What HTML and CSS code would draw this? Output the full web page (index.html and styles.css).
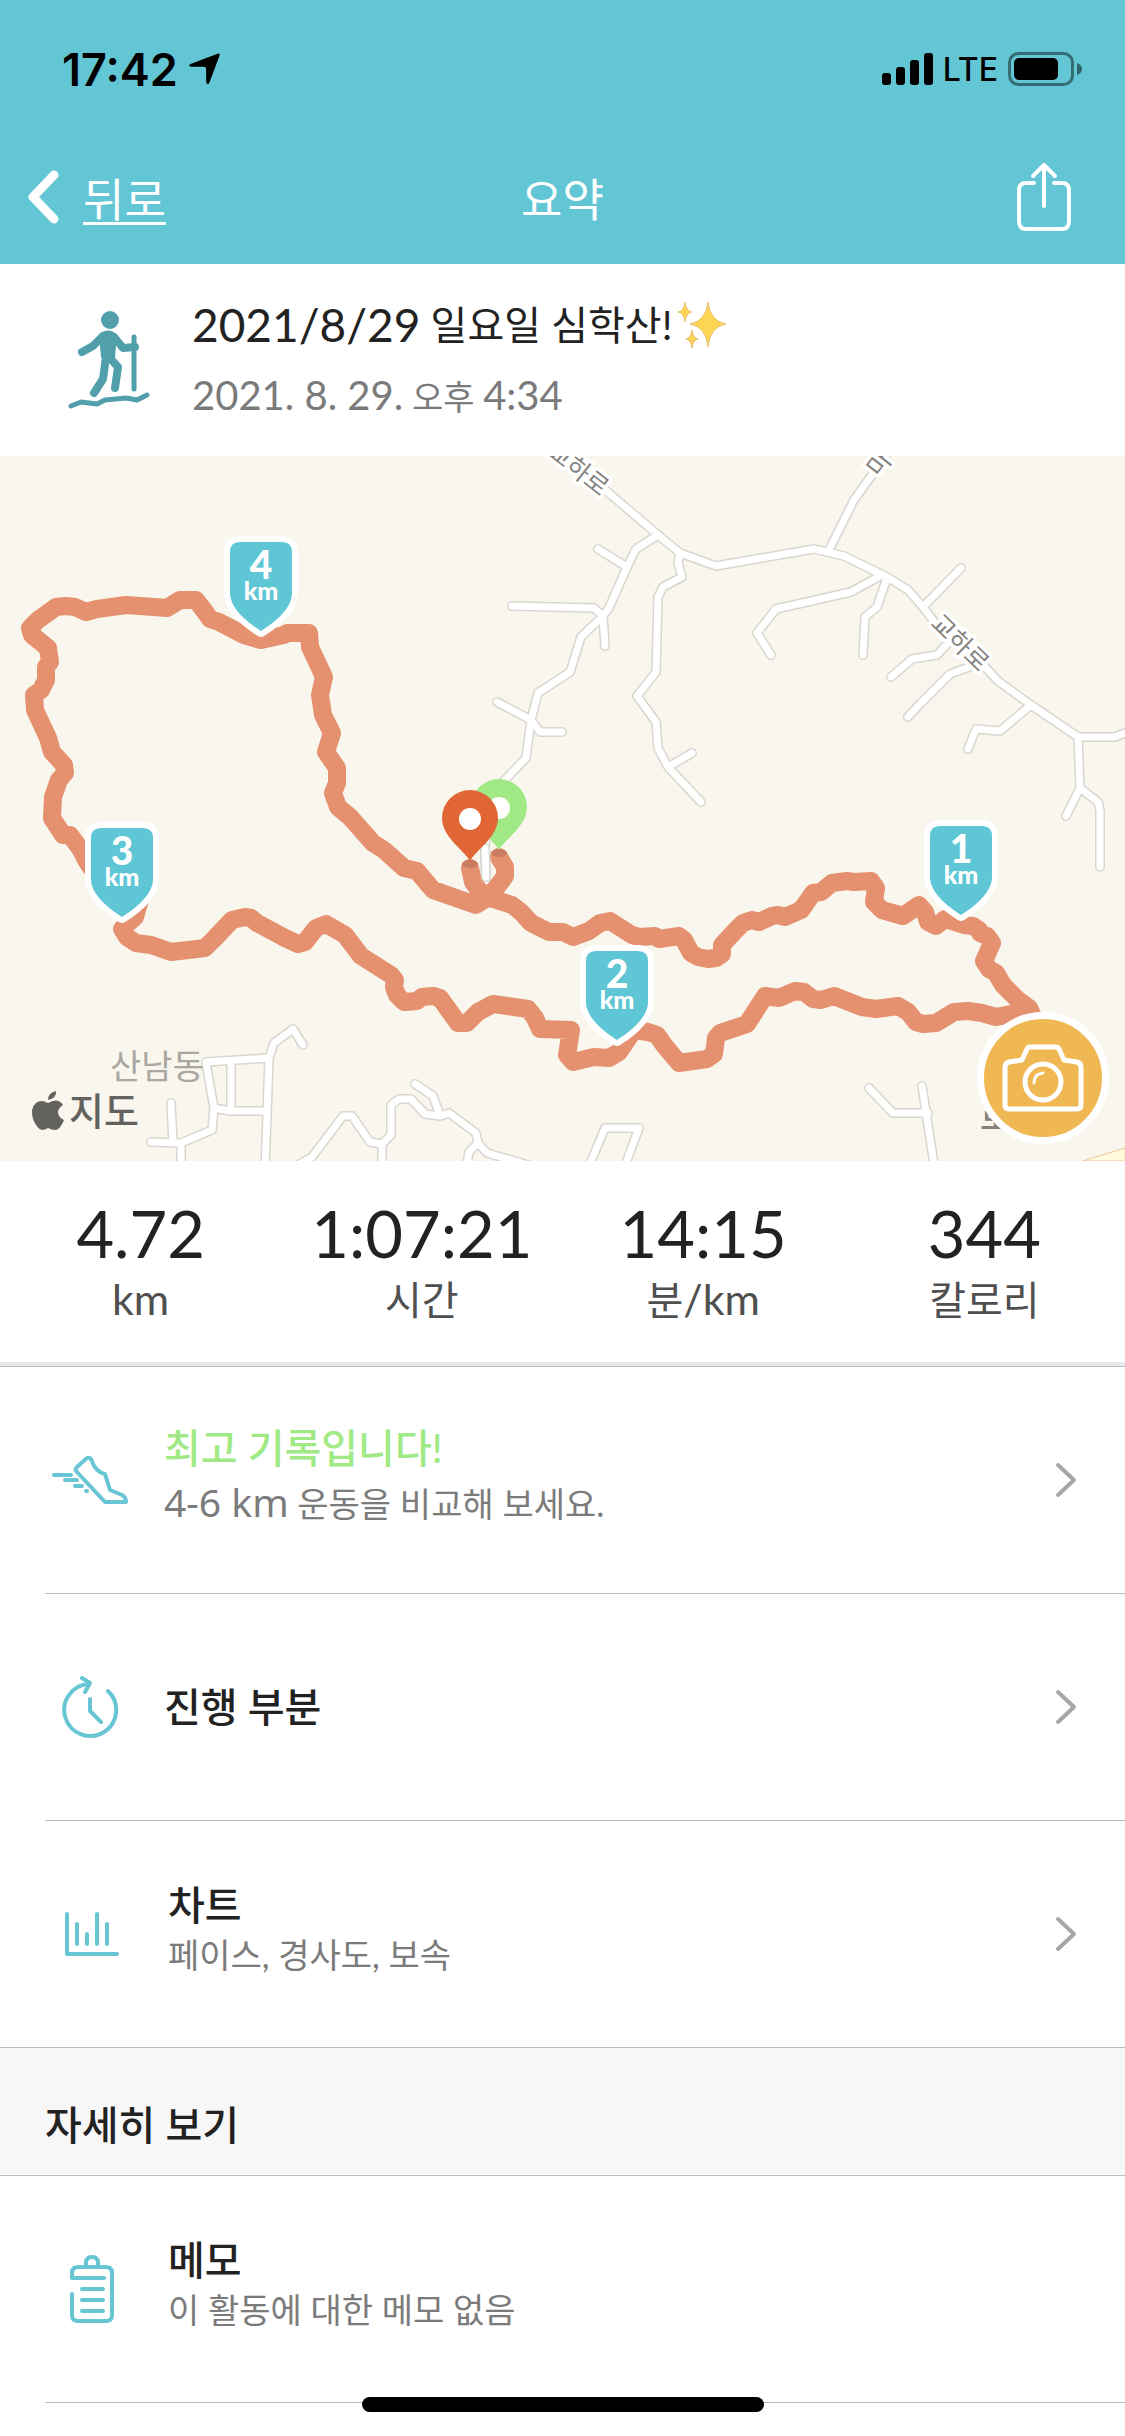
FILE: index.html
```html
<!DOCTYPE html>
<html lang="ko">
    <head>
        <meta charset="utf-8">
        <meta name="viewport" content="width=device-width, initial-scale=1">
        <title>요약</title>
        <link rel="stylesheet" href="styles.css">
    </head>
<body>
    <header>
        <div class="status">
            <div class="status-left">
                <span class="time">17:42</span>
                <svg class="location" viewBox="0 0 30 30" width="32" height="32"><path d="M27 1Q31 -1 29 4L20 28Q18 31 17 27V15Q17 13 15 13H3Q-1 12 3 10Z"/></svg>
            </div>
            <div class="status-right">
                <svg viewBox="0 0 51 32" width="51" height="32"><rect x="0" y="20" width="9" height="12" rx="3"/><rect x="14" y="14" width="9" height="18" rx="3"/><rect x="28" y="7" width="9" height="25" rx="3"/><rect x="42" y="0" width="9" height="32" rx="3"/></svg>
                <span class="network">LTE</span>
                <svg viewBox="0 0 74 34" width="74" height="34"><rect x="1.5" y="1.5" width="63" height="31" rx="9" fill="none" stroke="#000" stroke-opacity=".45" stroke-width="3"/><rect x="6" y="6" width="44" height="22" rx="5"/><path d="M69 11q5 2 5 6t-5 6z" fill-opacity=".5"/></svg>
            </div>
        </div>
        <nav>
            <a class="back" href="#">
                <svg viewBox="0 0 32 54" width="32" height="54"><path d="M27 5L6 27L27 49" fill="none" stroke="#fff" stroke-width="9" stroke-linecap="round" stroke-linejoin="round"/></svg>
                <span>뒤로</span>
            </a>
            <h1>요약</h1>
            <button class="share" type="button" aria-label="공유">
                <svg viewBox="0 0 54 70" width="54" height="70" fill="none" stroke="#fff" stroke-width="4" stroke-linecap="round" stroke-linejoin="round"><path d="M17 21H9Q2 21 2 28V59Q2 67 9 67H45Q52 67 52 59V28Q52 21 45 21H37M27 44V3M16 14L27 3L38 14"/></svg>
            </button>
        </nav>
    </header>

    <section class="activity">
        <svg class="walker" viewBox="0 0 82 98" width="82" height="98" fill="none" stroke="#509faa" stroke-linecap="round" stroke-linejoin="round">
            <circle cx="42" cy="9" r="9" fill="#509faa" stroke="none"/>
            <path d="M32 24Q40 17 48 24L46 46H34Z" fill="#509faa" stroke-width="2"/>
            <path d="M14 41L25 35L35 25M46 26L55 37L67 36M38 46L35 68L26 82M41 46L50 56L47 77" stroke-width="8"/>
            <path d="M66 26V78" stroke-width="5"/>
            <path d="M3 95L13 91L29 93L37 89L58 87L69 89L79 84" stroke-width="5"/>
        </svg>
        <div class="activity-text">
            <h2><span class="num">2021/8/29</span> 일요일 심학산!<svg class="sparkles" viewBox="0 0 50 50" width="50" height="50" fill="#fbd553" stroke="#e9bf6c" stroke-linejoin="round"><path d="M32 2Q34 21 50 24Q34 27 32 47Q30 27 14 24Q30 21 32 2ZM9 2Q10 11 16 12Q10 13 9 22Q8 13 2 12Q8 11 9 2ZM16 30Q17 38 22 39Q17 40 16 48Q15 40 10 39Q15 38 16 30Z"/></svg></h2>
            <p><span class="num">2021. 8. 29.</span> 오후 <span class="num">4:34</span></p>
        </div>
    </section>

    <section class="map">
        <svg class="map-canvas" viewBox="0 0 1125 705">
            <defs>
                <g id="roads">
                    <path d="M520 -33L603 32L658 79L680 97L716 110L814 93L844 100L887 121L908 134L923 151L935 167L986 212L998 225L1031 249L1078 281H1115L1135 273"/>
                    <path d="M829 94L854 44L874 16L900 -20M923 151L961 112"/>
                    <path d="M658 79L636 93L627 111L609 152L603 160L581 181L570 216L538 237L531 264L526 302L503 326L485 380L486 430"/>
                    <path d="M598 93L627 111M605 190L603 160L594 152L512 150M497 246L531 264L540 276H562"/>
                    <path d="M680 97L678 107L682 121L663 131L658 141L656 216L637 240L656 266L658 292L668 311L701 346M668 311L692 297"/>
                    <path d="M880 120L851 136L776 153L757 177L771 199M887 122L877 151L865 161L863 199"/>
                    <path d="M948 187L937 199L912 203L891 221M972 210L950 218L919 249L908 261M1031 249L1000 275L976 273L968 293"/>
                    <path d="M1078 281L1080 332L1066 360M1080 332L1098 346L1100 354V411"/>
                    <path d="M206 606L269 602L274 587L293 573L303 589M269 602L265 715M231 606V654M206 607L214 652L230 655H266M214 652L212 674L181 687L151 686M171 647L173 686M181 687V715"/>
                    <path d="M296 710L312 701L343 660H352L370 686L382 688V715M382 688L391 679V649L399 643H411L425 658L440 660L449 657L476 677L478 687L487 697L528 709M415 628L433 640L439 657M478 687L469 696L466 715"/>
                    <path d="M587 715L605 672H639L623 715M869 632L893 657H928M922 630L935 715"/>
                </g>
                <g id="shield">
                    <path d="M-31 -86Q-31 -96 -21 -96H21Q31 -96 31 -86V-44Q30 -26 0 -7Q-30 -26 -31 -44Z"/>
                </g>
                <g id="pin">
                    <path d="M0 0C-7 -12 -28 -24 -28 -43A28 28 0 0 1 28 -43C28 -24 7 -12 0 0Z"/>
                    <circle cx="0" cy="-42" r="11" fill="#fff"/>
                </g>
            </defs>
            <rect width="1125" height="705" fill="#f9f6ed"/>
            <path d="M1083 705L1125 692V705Z" fill="#fffbdc" stroke="#eec79a"/>
            <use href="#roads" class="road-edge"/>
            <use href="#roads" class="road"/>

            <text class="road-name" transform="translate(573 20) rotate(38)">교하로</text>
            <text class="road-name" transform="translate(886 13) rotate(-52)">마</text>
            <text class="road-name" transform="translate(954 193) rotate(44)">교하로</text>
            <text class="town" x="157" y="623">산남동</text>
            <text class="place" x="980" y="674">로</text>

            <path class="route" d="M499 401L505 411V420L497 431L487 441L512 449L521 456L531 467L549 476H563L573 481L589 475L600 467L610 465L632 479L639 481L655 480L659 483L679 480L684 484L691 497L698 501L708 503L716 502L722 498V489L734 476L743 467L752 464L759 466L772 460L778 459L785 461L801 454L804 450L813 437L821 436L832 427L847 425L854 426L871 425L876 432L874 446L882 454L903 460L919 449L925 456L928 466L936 470L945 463L964 469L973 470L979 474L980 477L987 480L992 487L984 505L989 513L996 517L1003 529L1018 544L1029 552L1033 561L1016 557L996 561L982 557L968 555L954 556L936 567L923 568L916 566L908 556L898 550L876 553L862 551L834 540L821 544L813 543L804 536L795 535L779 542L765 540L747 568L720 577L716 582L714 598L707 603L679 607L664 589L657 579L648 576L634 574L619 596L609 602L594 601L573 606L567 599L571 574L540 573L535 562L528 553L493 548L478 556L467 567H458L440 542L433 540L422 541L417 545L404 546L397 539L394 531L395 524L391 519L361 500L345 479L326 468L316 472L305 486L298 488L285 482L257 467L251 462L245 461L232 464L215 482L205 492L171 496L151 489L136 487L127 481L122 473L135 461L141 440L100 425L86 404L81 394L70 379H63L52 362L53 341L59 324L65 317L64 309L52 296L48 282L35 254L34 239L41 234L46 224V211L50 206L48 192L32 179L30 172L38 164L56 151L66 150L75 151L86 156L97 153L126 149L167 152L180 144H196L206 157L210 163L219 166L244 179L261 184L284 179L287 177H309L310 191L324 221L320 239L323 259L332 277L326 296L337 312V327L333 337L338 351L350 361L373 387L384 394L404 412L417 415L433 434L476 449L487 442L481 437L473 426L470 412"/>
            <path d="M485 392L486 421" class="road-edge"/>
            <path d="M485 392L486 421" class="road"/>
            <ellipse cx="499" cy="397" rx="8" ry="4" fill="#ca7c61"/>
            <ellipse cx="470" cy="408" rx="8" ry="4" fill="#ca7c61"/>
            <use href="#pin" x="499" y="394" fill="#a0e985"/>
            <use href="#pin" x="470" y="405" fill="#e06735"/>

            <g class="shield" transform="translate(261 182)"><use href="#shield"/><text y="-59">4</text><text y="-38" class="unit">km</text></g>
            <g class="shield" transform="translate(122 468)"><use href="#shield"/><text y="-59">3</text><text y="-38" class="unit">km</text></g>
            <g class="shield" transform="translate(961 466)"><use href="#shield"/><text y="-59">1</text><text y="-38" class="unit">km</text></g>
            <g class="shield" transform="translate(617 591)"><use href="#shield"/><text y="-59">2</text><text y="-38" class="unit">km</text></g>

            <path d="M56 635Q57 642 48 644Q48 637 56 635ZM48 647Q58 641 63 649Q58 652 58 657Q59 662 64 664Q60 674 55 674Q52 674 48 672Q45 674 42 674Q37 673 33 663Q30 652 36 647Q41 643 48 647Z" fill="#63625e"/>
            <text class="brand" x="69" y="669">지도</text>
        </svg>
        <button class="camera" type="button" aria-label="사진 추가">
            <svg viewBox="0 0 82 68" width="82" height="68" fill="none" stroke="#fff" stroke-width="5" stroke-linejoin="round"><path d="M7 18L20 16L25 5Q26 3 28 3H54Q56 3 57 5L62 16L75 18Q79 19 79 23V61Q79 65 75 65H7Q3 65 3 61V23Q3 19 7 18Z"/><circle cx="41" cy="38" r="18"/><path d="M32 39Q32 30 41 29" stroke-width="3" stroke-linecap="round"/></svg>
        </button>
    </section>

    <section class="stats">
        <div><b>4.72</b><p><span class="num">km</span></p></div>
        <div><b>1:07:21</b><p>시간</p></div>
        <div><b>14:15</b><p>분<span class="num">/km</span></p></div>
        <div><b>344</b><p>칼로리</p></div>
    </section>

    <main>
        <a class="row" href="#">
            <svg class="icon" viewBox="0 0 76 48" width="76" height="48"><path d="M35 2Q37 1 39 3L42 10Q47 17 53 18L58 34L70 39Q74 41 74 46H53L24 15Q23 13 25 11Z"/><path d="M2 19H19M13 24H25M23 30H30M34 35H35"/></svg>
            <div class="row-text">
                <h3 class="best">최고 기록입니다!</h3>
                <p><span class="num">4-6 km</span> 운동을 비교해 보세요.</p>
            </div>
            <svg class="chevron" viewBox="0 0 22 36" width="22" height="36"><path d="M3 3L19 18L3 33"/></svg>
        </a>
        <a class="row" href="#">
            <svg class="icon" viewBox="0 0 58 64" width="58" height="64"><path d="M47 16A26 26 0 1 1 28 9M21 3L29 8L24 17M29 24V36L40 47"/></svg>
            <div class="row-text">
                <h3>진행 부분</h3>
            </div>
            <svg class="chevron" viewBox="0 0 22 36" width="22" height="36"><path d="M3 3L19 18L3 33"/></svg>
        </a>
        <a class="row detail last" href="#">
            <svg class="icon" viewBox="0 0 54 44" width="54" height="44"><path d="M2 2V42H52M12 12V32M22 22V32M32 2V32M42 12V32"/></svg>
            <div class="row-text">
                <h3>차트</h3>
                <p>페이스, 경사도, 보속</p>
            </div>
            <svg class="chevron" viewBox="0 0 22 36" width="22" height="36"><path d="M3 3L19 18L3 33"/></svg>
        </a>
        <h3 class="section-title">자세히 보기</h3>
        <a class="row detail" href="#">
            <svg class="icon" viewBox="0 0 44 68" width="44" height="68"><path d="M34 23H2V18Q2 12 8 12H36Q42 12 42 18V60Q42 66 36 66H8Q2 66 2 60V39M16 11V8Q16 2 22 2T28 8V11M12 34H33M12 45H33M12 56H33"/></svg>
            <div class="row-text">
                <h3>메모</h3>
                <p>이 활동에 대한 메모 없음</p>
            </div>
        </a>
    </main>
    <div class="home-bar"></div>
</body>
</html>
```

FILE: styles.css
```css
* {
    box-sizing: border-box;
    padding: 0;
    margin: 0;
}
body {
    position: relative;
    min-height: 100vh;
    background-color: white;
    color: #222;
    font-family: Lato, "Noto Sans CJK KR", sans-serif;
    font-size: 40px;
}
h1, h2, h3 {
    font-weight: 400;
}
a {
    color: inherit;
    text-decoration: none;
}
button {
    border: none;
    background: none;
    cursor: pointer;
}
svg {
    display: block;
    flex-shrink: 0;
}
.num {
    line-height: 1;
}

/* top bar */
header {
    background-color: #62c6d5;
    color: white;
}
.status {
    display: flex;
    justify-content: space-between;
    align-items: center;
    height: 138px;
    padding: 0 43px 0 62px;
    color: black;
    font-family: Inter, sans-serif;
}
.status-left, .status-right {
    display: flex;
    align-items: center;
    gap: 10px;
}
.time {
    font-size: 45px;
    font-weight: 600;
}
.network {
    font-size: 32px;
    font-weight: 500;
}
nav {
    display: grid;
    grid-template-columns: 1fr auto 1fr;
    align-items: center;
    height: 126px;
    padding: 0 27px 8px;
}
.back {
    display: flex;
    align-items: center;
    gap: 24px;
    font-size: 45px;
}
.back span {
    text-decoration: underline;
    text-decoration-thickness: 3px;
    text-underline-offset: 5px;
}
h1 {
    font-size: 45px;
}
.share {
    justify-self: end;
    margin-right: 27px;
}

/* activity title */
.activity {
    display: flex;
    align-items: center;
    gap: 42px;
    height: 192px;
    padding: 0 68px;
}
.activity-text {
    display: flex;
    flex-direction: column;
    gap: 14px;
}
h2 {
    display: flex;
    align-items: center;
    white-space: pre;
    font-size: 40px;
    line-height: 60px;
}
h2 .num {
    font-size: 46px;
}
.sparkles {
    margin-left: 4px;
}
.activity p {
    color: #7b7b7b;
    font-size: 34px;
    line-height: 56px;
}
.activity p .num {
    font-size: 40px;
}

/* map */
.map {
    position: relative;
}
.map-canvas {
    width: 100%;
    height: auto;
}
.road, .road-edge {
    fill: none;
    stroke: white;
    stroke-width: 7px;
    stroke-linecap: round;
    stroke-linejoin: round;
}
.road-edge {
    stroke: #d9d6cf;
    stroke-width: 10px;
}
.route {
    fill: none;
    stroke: #e5906e;
    stroke-width: 18px;
    stroke-linejoin: round;
    stroke-linecap: round;
}
.road-name {
    fill: #85837f;
    stroke: white;
    stroke-width: 7px;
    stroke-linejoin: round;
    paint-order: stroke;
    font-size: 25px;
    text-anchor: middle;
}
.town {
    fill: #a9a7a1;
    font-size: 34px;
    text-anchor: middle;
}
.place, .brand {
    fill: #63625e;
    font-size: 38px;
    font-weight: 500;
}
.place {
    fill: #85837f;
    font-size: 34px;
}
.shield use {
    fill: #5fc6d5;
    stroke: white;
    stroke-width: 12px;
    stroke-linejoin: round;
    paint-order: stroke;
}
.shield text {
    fill: white;
    font-size: 39px;
    font-weight: 900;
    text-anchor: middle;
}
.shield .unit {
    font-size: 25px;
}
.camera {
    display: flex;
    justify-content: center;
    align-items: center;
    position: absolute;
    right: 16px;
    bottom: 17px;
    width: 132px;
    height: 132px;
    border: 7px solid white;
    border-radius: 50%;
    background-color: #f0b853;
}

/* distance, time, pace, calories */
.stats {
    display: grid;
    grid-template-columns: repeat(4, 1fr);
    padding: 34px 0 37px;
    border-bottom: 1px solid #bcbcc0;
    box-shadow: inset 0 -4px #e9e9ed;
    text-align: center;
}
.stats b {
    display: block;
    font-size: 65px;
    font-weight: 400;
    line-height: 76px;
}
.stats p {
    height: 58px;
    color: #4f4f4f;
    font-size: 40px;
    line-height: 58px;
}
.stats .num {
    font-size: 43px;
}

/* list */
.row {
    display: grid;
    grid-template-columns: 90px 1fr auto;
    align-items: center;
    gap: 29px;
    height: 227px;
    margin-left: 45px;
    padding-right: 48px;
    border-bottom: 1px solid #bcbcc0;
}
.row.detail {
    grid-template-columns: 94px 1fr auto;
}
.row.last {
    margin-left: 0;
    padding-left: 45px;
}
.icon {
    justify-self: center;
    fill: none;
    stroke: #68c5d3;
    stroke-width: 4px;
    stroke-linecap: round;
    stroke-linejoin: round;
}
.row h3, .section-title {
    font-size: 40px;
    font-weight: 500;
    line-height: 54px;
}
.row .best {
    margin-bottom: 6px;
    color: #a0e985;
}
.row p {
    margin-bottom: 12px;
    color: #7b7b7b;
    font-size: 34px;
    line-height: 46px;
}
.row p .num {
    font-family: "Noto Sans", sans-serif;
    font-size: 39px;
}
.chevron {
    fill: none;
    stroke: #a6a6a9;
    stroke-width: 4px;
    stroke-linecap: round;
    stroke-linejoin: round;
}
.section-title {
    height: 128px;
    padding: 50px 45px 0;
    border-bottom: 1px solid #bcbcc0;
    background-color: #f7f7f7;
}
.home-bar {
    position: absolute;
    bottom: 24px;
    left: 50%;
    width: 402px;
    height: 15px;
    margin-left: -201px;
    border-radius: 8px;
    background-color: black;
}
```
